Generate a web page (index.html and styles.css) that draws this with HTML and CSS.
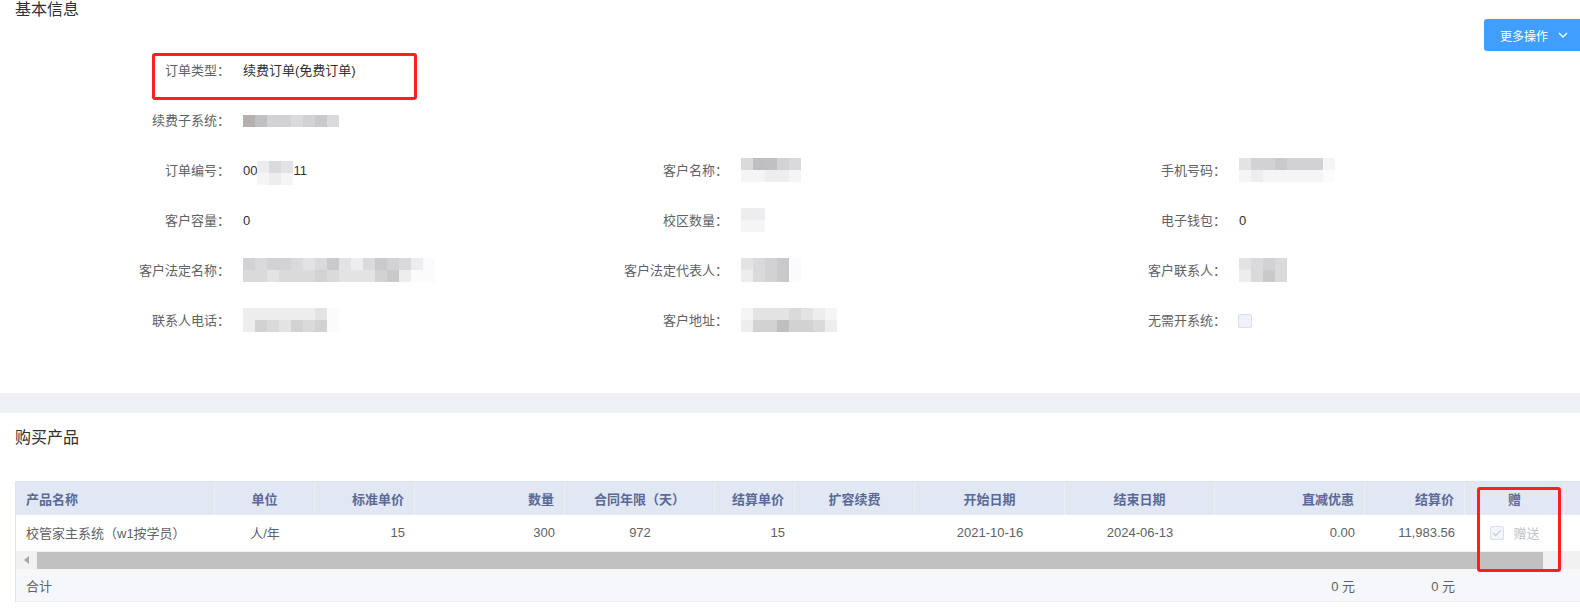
FILE: index.html
```html
<!DOCTYPE html>
<html lang="zh-CN">
<head>
<meta charset="utf-8">
<title>订单详情</title>
<link rel="stylesheet" href="styles.css">
</head>
<body>
<div class="page">
  <section class="card basic">
    <div class="card-head">
      <h2 class="card-title">基本信息</h2>
      <button class="btn-more" type="button"><span class="btn-text">更多操作</span><svg class="chev" width="10" height="6" viewBox="0 0 10 6"><polyline points="1,1 5,5 9,1" fill="none" stroke="#fff" stroke-width="1.3"/></svg></button>
    </div>
    <div class="form">
      <div class="row">
        <div class="item">
          <span class="label">订单类型：</span><span class="value">续费订单(免费订单)</span>
          <span class="mark mark-type"></span>
        </div>
      </div>
      <div class="row">
        <div class="item">
          <span class="label">续费子系统：</span>
          <span class="value"><span class="mosaic one"><i class="k1"></i><i class="k2"></i><i class="g3"></i><i class="g3"></i><i class="g4"></i><i class="g3"></i><i class="g2"></i><i class="g4"></i></span></span>
        </div>
      </div>
      <div class="row">
        <div class="item">
          <span class="label">订单编号：</span>
          <span class="value">00<span class="mosaic soft"><i class="g6"></i><i class="g7"></i><i class="g4"></i><i class="g6"></i><i class="g5"></i><i class="g7"></i></span>11</span>
        </div>
        <div class="item">
          <span class="label">客户名称：</span>
          <span class="value"><span class="mosaic"><i class="g4"></i><i class="g7"></i><i class="g1"></i><i class="g7"></i><i class="k2"></i><i class="g6"></i><i class="g3"></i><i class="g6"></i><i class="g4"></i><i class="g7"></i></span></span>
        </div>
        <div class="item">
          <span class="label">手机号码：</span>
          <span class="value"><span class="mosaic"><i class="g5"></i><i class="g7"></i><i class="g3"></i><i class="g6"></i><i class="g3"></i><i class="g7"></i><i class="g2"></i><i class="g7"></i><i class="g3"></i><i class="g7"></i><i class="g3"></i><i class="g7"></i><i class="g3"></i><i class="g7"></i><i class="g7"></i><i class="w"></i></span></span>
        </div>
      </div>
      <div class="row">
        <div class="item">
          <span class="label">客户容量：</span><span class="value">0</span>
        </div>
        <div class="item">
          <span class="label">校区数量：</span>
          <span class="value"><span class="mosaic"><i class="g6"></i><i class="g7"></i><i class="g6"></i><i class="g7"></i></span></span>
        </div>
        <div class="item">
          <span class="label">电子钱包：</span><span class="value">0</span>
        </div>
      </div>
      <div class="row">
        <div class="item">
          <span class="label">客户法定名称：</span>
          <span class="value"><span class="mosaic"><i class="g3"></i><i class="g4"></i><i class="g4"></i><i class="g4"></i><i class="g3"></i><i class="g5"></i><i class="g3"></i><i class="g4"></i><i class="g4"></i><i class="g4"></i><i class="g5"></i><i class="g4"></i><i class="g4"></i><i class="g3"></i><i class="g2"></i><i class="g4"></i><i class="g5"></i><i class="g5"></i><i class="g6"></i><i class="g5"></i><i class="g4"></i><i class="g5"></i><i class="g2"></i><i class="g3"></i><i class="g3"></i><i class="g2"></i><i class="g4"></i><i class="g6"></i><i class="g6"></i><i class="w"></i><i class="w"></i><i class="w"></i></span></span>
        </div>
        <div class="item">
          <span class="label">客户法定代表人：</span>
          <span class="value"><span class="mosaic"><i class="g5"></i><i class="g6"></i><i class="g4"></i><i class="g4"></i><i class="g3"></i><i class="g3"></i><i class="g2"></i><i class="g2"></i><i class="w"></i><i class="w"></i></span></span>
        </div>
        <div class="item">
          <span class="label">客户联系人：</span>
          <span class="value"><span class="mosaic"><i class="g5"></i><i class="g6"></i><i class="g4"></i><i class="g4"></i><i class="g3"></i><i class="g2"></i><i class="g4"></i><i class="g4"></i></span></span>
        </div>
      </div>
      <div class="row">
        <div class="item">
          <span class="label">联系人电话：</span>
          <span class="value"><span class="mosaic"><i class="g6"></i><i class="g6"></i><i class="g6"></i><i class="g3"></i><i class="g6"></i><i class="g4"></i><i class="g6"></i><i class="g5"></i><i class="g6"></i><i class="g3"></i><i class="g6"></i><i class="g4"></i><i class="g5"></i><i class="g3"></i><i class="w"></i><i class="w"></i></span></span>
        </div>
        <div class="item">
          <span class="label">客户地址：</span>
          <span class="value"><span class="mosaic"><i class="g7"></i><i class="g6"></i><i class="g5"></i><i class="g3"></i><i class="g5"></i><i class="g3"></i><i class="g5"></i><i class="g1"></i><i class="g4"></i><i class="g3"></i><i class="g5"></i><i class="g3"></i><i class="g6"></i><i class="g4"></i><i class="g7"></i><i class="g6"></i></span></span>
        </div>
        <div class="item">
          <span class="label">无需开系统：</span>
          <span class="value"><span class="checkbox"></span></span>
        </div>
      </div>
    </div>
  </section>

  <div class="band"></div>

  <section class="card products">
    <h2 class="card-title">购买产品</h2>
    <div class="table-wrap">
      <table class="grid">
        <colgroup>
          <col class="w199"><col class="w100"><col class="w100"><col class="w150"><col class="w150"><col class="w80"><col class="w120"><col class="w150"><col class="w150"><col class="w150"><col class="w100"><col class="w100"><col class="w60">
        </colgroup>
        <thead>
          <tr>
            <th class="l">产品名称</th>
            <th class="c">单位</th>
            <th class="r">标准单价</th>
            <th class="r">数量</th>
            <th class="c">合同年限（天）</th>
            <th class="r">结算单价</th>
            <th class="c">扩容续费</th>
            <th class="c">开始日期</th>
            <th class="c">结束日期</th>
            <th class="r">直减优惠</th>
            <th class="r">结算价</th>
            <th class="c">赠</th>
            <th></th>
          </tr>
        </thead>
        <tbody>
          <tr class="data">
            <td class="l">校管家主系统（w1按学员）</td>
            <td class="c">人/年</td>
            <td class="r">15</td>
            <td class="r">300</td>
            <td class="c">972</td>
            <td class="r">15</td>
            <td class="c"></td>
            <td class="c">2021-10-16</td>
            <td class="c">2024-06-13</td>
            <td class="r">0.00</td>
            <td class="r">11,983.56</td>
            <td class="c"><span class="gift"><span class="cb-checked"></span><span class="gift-text">赠送</span></span></td>
            <td></td>
          </tr>
          <tr class="scroll">
            <td colspan="13">
              <div class="track"><span class="arrow"></span><span class="thumb"></span></div>
            </td>
          </tr>
          <tr class="sum">
            <td class="l">合计</td>
            <td></td><td></td><td></td><td></td><td></td><td></td><td></td><td></td>
            <td class="r">0 元</td>
            <td class="r">0 元</td>
            <td></td><td></td>
          </tr>
        </tbody>
      </table>
      <span class="mark mark-gift"></span>
    </div>
  </section>
</div>
</body>
</html>
```

FILE: styles.css
```css
html, body {
  margin: 0;
  padding: 0;
  overflow: hidden;
  background: #ffffff;
}

body {
  font-family: "Liberation Sans", "Noto Sans CJK SC", sans-serif;
  font-size: 13px;
  color: #303133;
}

.page {
  width: 1580px;
  min-height: 614px;
}

.card {
  background: #ffffff;
}

.card-title {
  margin: 0;
  font-size: 16px;
  line-height: 20px;
  font-weight: normal;
  color: #303133;
}

/* ---------- basic info ---------- */
.basic {
  padding-bottom: 38px;
}

.card-head {
  display: flex;
  justify-content: space-between;
  align-items: flex-start;
  height: 51px;
  padding-left: 15px;
}

.btn-more {
  flex: none;
  margin-top: 19px;
  height: 32px;
  width: 96px;
  padding: 0 0 0 16px;
  border: none;
  border-radius: 3px 0 0 3px;
  background: #409eff;
  color: #ffffff;
  font-family: inherit;
  font-size: 12px;
  display: flex;
  align-items: center;
  gap: 10px;
  white-space: nowrap;
  cursor: pointer;
}

.btn-text {
  flex: none;
}

.chev {
  flex: none;
}

.form {
  margin-top: 4px;
  padding-left: 100px;
}

.row {
  display: grid;
  grid-template-columns: repeat(3, 498px);
  height: 32px;
  margin-bottom: 18px;
}

.item {
  display: flex;
  align-items: center;
  position: relative;
}

.label {
  flex: none;
  width: 130px;
  text-align: right;
  color: #606266;
  font-size: 13px;
  line-height: 32px;
}

.value {
  margin-left: 13px;
  display: flex;
  align-items: center;
  color: #303133;
  font-size: 13px;
  line-height: 32px;
}

.mosaic {
  display: inline-grid;
  grid-auto-flow: column;
  grid-template-rows: repeat(2, 12px);
  grid-auto-columns: 12px;
  margin-top: -2px;
}

.mosaic.one {
  grid-template-rows: 12px;
  margin-top: 0;
}

.mosaic.soft {
  margin-top: 4px;
}

.mosaic i {
  display: block;
}

.k1 { background: #b5afad; }
.k2 { background: #c0bfc1; }
.g1 { background: #bebfc1; }
.g2 { background: #c9c9cb; }
.g3 { background: #d2d2d4; }
.g4 { background: #dadadc; }
.g5 { background: #e3e3e5; }
.g6 { background: #ededef; }
.g7 { background: #f5f5f7; }
.w  { background: #fbfbfd; }

.checkbox {
  display: block;
  width: 12px;
  height: 12px;
  border: 1px solid #dcdfe6;
  border-radius: 2px;
  background: #edf2fc;
  margin-left: -1px;
}

.mark {
  position: absolute;
  border: 3px solid #ff1f1f;
  border-radius: 3px;
  box-sizing: border-box;
  pointer-events: none;
}

.mark-type {
  left: 52px;
  top: -2px;
  width: 265px;
  height: 47px;
}

/* ---------- band ---------- */
.band {
  height: 20px;
  background: #edf0f5;
}

/* ---------- products ---------- */
.products {
  padding-top: 15px;
}

.products .card-title {
  padding-left: 15px;
}

.table-wrap {
  position: relative;
  margin-top: 33px;
  margin-left: 15px;
}

.grid {
  border-collapse: separate;
  border-spacing: 0;
  table-layout: fixed;
  width: 1610px;
  border-top: 1px solid #dfe3ea;
  border-left: 1px solid #dfe3ea;
  font-size: 13px;
}

.w199 { width: 199px; }
.w100 { width: 100px; }
.w150 { width: 150px; }
.w80  { width: 80px; }
.w120 { width: 120px; }
.w60  { width: 61px; }

.grid th {
  height: 33px;
  padding: 0 10px;
  background: #e1e7f3;
  color: #5a6a97;
  font-weight: bold;
  border-right: 1px solid #ebeff8;
  white-space: nowrap;
  overflow: hidden;
}

.grid td {
  padding: 0 10px;
  white-space: nowrap;
  overflow: hidden;
  color: #606266;
}

.l { text-align: left; }
.c { text-align: center; }
.r { text-align: right; }

.data td {
  height: 35px;
  background: #ffffff;
}

.scroll td {
  padding: 0;
  height: 19px;
}

.track {
  display: flex;
  align-items: center;
  height: 18px;
  margin-top: 1px;
  background: #f1f1f1;
}

.arrow {
  flex: none;
  width: 0;
  height: 0;
  margin-left: 8px;
  border-top: 4px solid transparent;
  border-bottom: 4px solid transparent;
  border-right: 5px solid #a3a3a3;
}

.thumb {
  flex: none;
  width: 1506px;
  height: 17px;
  margin-left: 8px;
  background: #c1c1c1;
}

.sum td {
  height: 32px;
  background: #f5f7fa;
  border-bottom: 1px solid #ebeef5;
}

.gift {
  display: inline-flex;
  align-items: center;
  gap: 9px;
  vertical-align: middle;
}

.cb-checked {
  position: relative;
  display: block;
  width: 12px;
  height: 12px;
  border: 1px solid #dcdfe6;
  border-radius: 2px;
  background: #f2f6fc;
}

.cb-checked::after {
  content: "";
  position: absolute;
  left: 4px;
  top: 1px;
  width: 3px;
  height: 7px;
  border: 1px solid #c0c4cc;
  border-left: 0;
  border-top: 0;
  transform: rotate(45deg);
}

.gift-text {
  color: #c0c4cc;
}

.mark-gift {
  left: 1462px;
  top: 6px;
  width: 84px;
  height: 85px;
}
```
